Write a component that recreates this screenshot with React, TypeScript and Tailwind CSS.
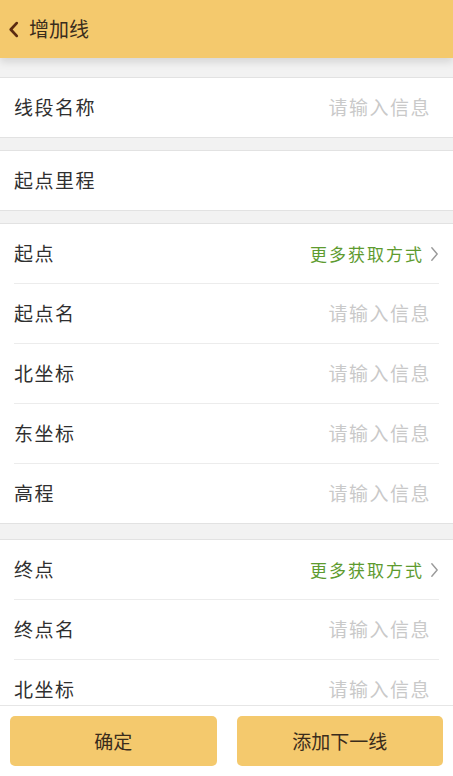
type Row = {
  label: string
  placeholder?: string
  more?: boolean
}

const font = "font-['Noto_Sans_CJK_SC','Noto_Sans',sans-serif]"

const Chevron = () => (
  <svg viewBox="0 0 10 18" className="ml-[6px] h-[16px] w-[9px]">
    <path d="M2 2 L8 9 L2 16" fill="none" stroke="#9a9a9a" strokeWidth="1.6" strokeLinecap="round" strokeLinejoin="round" />
  </svg>
)

const FieldRow = ({ row, last }: { row: Row; last: boolean }) => (
  <div className="px-[14px]">
    <div
      className={`flex items-center justify-between ${
        last ? "h-[59px]" : "h-[60px] border-b border-[#ececec]"
      }`}
    >
      <span className="text-[19px] tracking-[1.5px] text-[#2f2f2f]">{row.label}</span>
      {row.more ? (
        <span className="flex items-center text-[17px] tracking-[2px] text-[#5e9b2f]">
          更多获取方式
          <Chevron />
        </span>
      ) : row.placeholder ? (
        <span className="mr-[8px] text-[19px] tracking-[1.5px] text-[#c9c9c9]">{row.placeholder}</span>
      ) : null}
    </div>
  </div>
)

const Section = ({ rows }: { rows: Row[] }) => (
  <div className="border-y border-[#e2e2e2] bg-white">
    {rows.map((row, i) => (
      <FieldRow key={i} row={row} last={i === rows.length - 1} />
    ))}
  </div>
)

const ph = "请输入信息"

export default function App() {
  return (
    <div className={`flex h-[776px] w-[453px] flex-col overflow-hidden bg-[#f2f2f2] ${font}`}>
      <header className="relative z-10 flex h-[58px] shrink-0 items-center bg-[#f4c96d] shadow-[0_4px_8px_rgba(0,0,0,0.12)]">
        <svg viewBox="0 0 12 18" className="ml-[8px] h-[17px] w-[11px]">
          <path d="M9.5 2 L3 9 L9.5 16" fill="none" stroke="#5b2a10" strokeWidth="3" strokeLinecap="round" strokeLinejoin="round" />
        </svg>
        <span className="ml-[10px] text-[20px] text-[#3a2c1c]">增加线</span>
      </header>

      <main className="flex flex-1 flex-col gap-[12px] overflow-hidden pt-[19px]">
        <Section rows={[{ label: "线段名称", placeholder: ph }]} />
        <Section rows={[{ label: "起点里程" }]} />
        <div className="flex flex-col gap-[15px]">
          <Section
            rows={[
              { label: "起点", more: true },
              { label: "起点名", placeholder: ph },
              { label: "北坐标", placeholder: ph },
              { label: "东坐标", placeholder: ph },
              { label: "高程", placeholder: ph },
            ]}
          />
          <Section
            rows={[
              { label: "终点", more: true },
              { label: "终点名", placeholder: ph },
              { label: "北坐标", placeholder: ph },
            ]}
          />
        </div>
      </main>

      <footer className="flex h-[71px] shrink-0 gap-[20px] border-t border-[#e6e6e6] bg-white px-[10px] py-[10px]">
        <button className="flex flex-1 items-center justify-center rounded-[5px] bg-[#f4c96d]">
          <span className="text-[19px] leading-[26px] text-[#3a2c1c]">确定</span>
        </button>
        <button className="flex flex-1 items-center justify-center rounded-[5px] bg-[#f4c96d]">
          <span className="text-[19px] leading-[26px] text-[#3a2c1c]">添加下一线</span>
        </button>
      </footer>
    </div>
  )
}
